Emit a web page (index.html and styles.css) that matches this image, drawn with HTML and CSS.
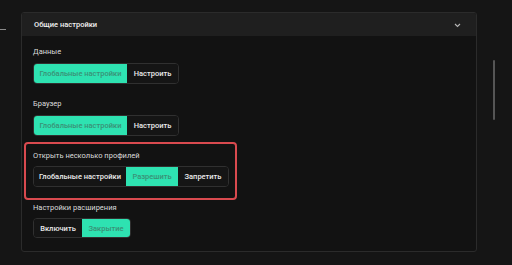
FILE: index.html
```html
<!DOCTYPE html>
<html lang="ru">
<head>
  <meta charset="UTF-8" />
  <meta name="viewport" content="width=device-width, initial-scale=1.0"/>
  <title>Общие настройки</title>
  <link rel="stylesheet" href="styles.css">
</head>
<body>
  <div class="page">
    <div class="rail"><span class="rail-line"></span></div>

    <div class="card">
      <div class="card-head">
        <span>Общие настройки</span>
        <svg class="chevron" width="7" height="5" viewBox="0 0 7 5"><path d="M1 1 L3.5 3.5 L6 1" fill="none" stroke="#b5b5b5" stroke-width="1.1"/></svg>
      </div>

      <div class="card-body">
        <div class="group g1">
          <div class="label">Данные</div>
          <div class="seg">
            <button class="on w93">Глобальные настройки</button>
            <button class="w51">Настроить</button>
          </div>
        </div>

        <div class="group g2">
          <div class="label">Браузер</div>
          <div class="seg">
            <button class="on w93">Глобальные настройки</button>
            <button class="w51">Настроить</button>
          </div>
        </div>

        <div class="group g3 marked">
          <div class="label">Открыть несколько профилей</div>
          <div class="seg">
            <button class="w92">Глобальные настройки</button>
            <button class="on w52">Разрешить</button>
            <button class="w50">Запретить</button>
          </div>
        </div>

        <div class="group g4">
          <div class="label">Настройки расширения</div>
          <div class="seg">
            <button class="w48">Включить</button>
            <button class="on w48">Закрытие</button>
          </div>
        </div>
      </div>
    </div>

    <div class="scroll"><span class="thumb"></span></div>
  </div>
</body>
</html>
```

FILE: styles.css
```css
body {
  margin: 0;
  background: #151515;
  font-family: Roboto, 'Liberation Sans', sans-serif;
  color: #e8e8e8;
}
.page {
  display: flex;
  align-items: flex-start;
  padding-top: 12px;
  height: 253px;
}
.rail {
  width: 21px;
  padding-top: 17px;
}
.rail-line {
  display: block;
  width: 6px;
  height: 1px;
  background: #8a8a8a;
}
.card {
  width: 454px;
  height: 238px;
  border: 1px solid #2b2b2b;
  border-radius: 3px;
  background: #121212;
  overflow: hidden;
}
.card-head {
  height: 23px;
  background: #1f1f1f;
  display: flex;
  align-items: center;
  justify-content: space-between;
  padding: 0 15px 0 12px;
  font-size: 7.5px;
  font-weight: 500;
  color: #f2f2f2;
}
.chevron {
  margin-top: 1px;
}
.card-body {
  padding: 11px 11px 0 11px;
}
.label {
  font-size: 7.5px;
  line-height: 10px;
  height: 10px;
  color: #dcdcdc;
  white-space: nowrap;
}
.seg {
  display: inline-flex;
  margin-top: 6px;
  height: 21px;
  border: 1px solid #303030;
  border-radius: 4px;
  overflow: hidden;
  box-sizing: border-box;
}
.seg button {
  border: none;
  background: #151515;
  color: #ececec;
  font-family: inherit;
  font-size: 7.5px;
  font-weight: 500;
  padding: 0;
  text-align: center;
  white-space: nowrap;
}
.seg button.on {
  background: #2ee2b1;
  color: #3a9176;
}
.w93 { width: 93px; }
.w92 { width: 92px; }
.w52 { width: 52px; }
.w51 { width: 51px; }
.w50 { width: 50px; }
.w48 { width: 48px; }

.g2 {
  margin-top: 15px;
}
.marked {
  width: fit-content;
  margin: 6px 0 0 -9px;
  padding: 7px 6px 11px 7px;
  border: 2px solid #d94a4f;
  border-radius: 4px;
}
.marked .seg {
  margin-top: 5px;
  height: 21px;
}
.g4 {
  margin-top: 3px;
}
.g4 .seg {
  margin-top: 5px;
  height: 20px;
}
.scroll {
  margin-left: 16px;
  padding-top: 48px;
}
.thumb {
  display: block;
  width: 2px;
  height: 60px;
  border-radius: 1px;
  background: #555;
}
```
